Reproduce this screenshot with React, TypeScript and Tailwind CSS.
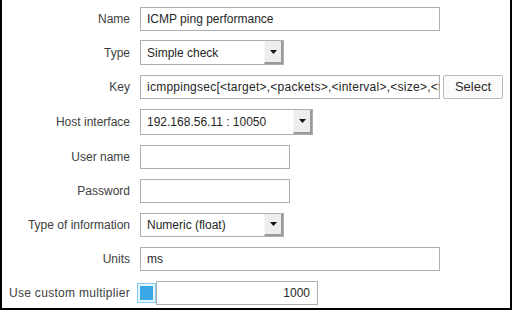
import React from "react";

const font = { fontFamily: '"Liberation Sans", Arial, sans-serif' };

function Label({ children, wide = false }: { children: React.ReactNode; wide?: boolean }) {
  return (
    <div
      className={`w-[128px] shrink-0 text-right text-[12px] text-[#404040] leading-none whitespace-nowrap ${wide ? "tracking-[0.3px]" : ""}`}
    >
      {children}
    </div>
  );
}

function Input({
  w,
  h = 24,
  value = "",
  right = false,
  spaced = false,
}: {
  w: number;
  h?: number;
  value?: string;
  right?: boolean;
  spaced?: boolean;
}) {
  return (
    <div
      className={`border border-[#aab0b4] bg-white text-[12px] text-[#262626] flex items-center overflow-hidden whitespace-nowrap ${right ? "justify-end pr-[7px]" : "pl-[6px]"} ${spaced ? "tracking-[0.25px]" : ""}`}
      style={{ width: w, height: h }}
    >
      <span className="overflow-hidden">{value}</span>
    </div>
  );
}

function Select({ w, h = 25, value }: { w: number; h?: number; value: string }) {
  return (
    <div
      className="border border-[#aab0b4] bg-white text-[12px] text-[#262626] flex items-stretch"
      style={{ width: w, height: h }}
    >
      <div className="flex-1 flex items-center pl-[6px] whitespace-nowrap overflow-hidden">{value}</div>
      <div className="w-[19px] bg-[#ededed] border-r-2 border-b-2 border-[#9a9a9a] border-l border-l-[#f7f7f7] flex items-center justify-center">
        <svg width="7" height="4" viewBox="0 0 7 4">
          <polygon points="0,0 7,0 3.5,4" fill="#111" />
        </svg>
      </div>
    </div>
  );
}

function Row({ label, children }: { label: string; children: React.ReactNode }) {
  return (
    <div className="flex items-center">
      <Label>{label}</Label>
      <div className="ml-[10px] flex items-center">{children}</div>
    </div>
  );
}

export default function App() {
  return (
    <div
      className="w-[512px] h-[310px] bg-white border-l-2 border-r-2 border-b-2 border-black flex flex-col gap-[10px] pt-[7px]"
      style={font}
    >
      <Row label="Name">
        <Input w={300} h={24} value="ICMP ping performance" />
      </Row>
      <div className="-mt-[1px]">
        <Row label="Type">
          <Select w={144} h={25} value="Simple check" />
        </Row>
      </div>
      <Row label="Key">
        <Input w={300} h={24} value="icmppingsec[<target>,<packets>,<interval>,<size>,<t" spaced />
        <div className="ml-[3px] w-[60px] h-[24px] border border-[#b8bcbf] rounded-[2px] bg-[#fbfbfb] flex items-center justify-center text-[13px] text-[#2a2a2a]">
          Select
        </div>
      </Row>
      <Row label="Host interface">
        <Select w={173} h={26} value="192.168.56.11 : 10050" />
      </Row>
      <Row label="User name">
        <Input w={150} h={24} />
      </Row>
      <Row label="Password">
        <Input w={150} h={24} />
      </Row>
      <Row label="Type of information">
        <Select w={144} h={24} value="Numeric (float)" />
      </Row>
      <Row label="Units">
        <Input w={300} h={24} value="ms" />
      </Row>
      <div className="flex items-center">
        <Label wide>Use custom multiplier</Label>
        <div className="ml-[7px] flex items-center">
          <div className="w-[19px] h-[20px] border border-[#7fcdf2] bg-[#e6f5fd] p-[2px]">
            <div className="w-full h-full bg-[#3aa8e4]" />
          </div>
          <Input w={162} h={24} value="1000" right />
        </div>
      </div>
    </div>
  );
}
